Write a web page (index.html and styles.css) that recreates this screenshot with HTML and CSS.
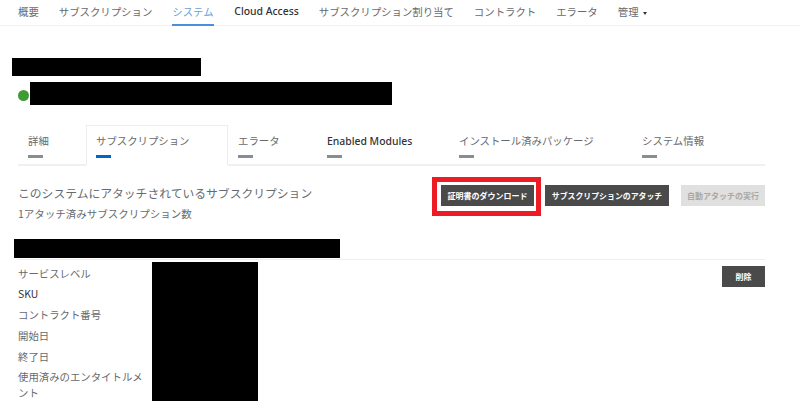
FILE: index.html
```html
<!DOCTYPE html>
<html lang="ja">
<head>
<meta charset="utf-8">
<title>システム</title>
<link rel="stylesheet" href="styles.css">
</head>
<body>
<nav class="topnav">
  <a class="nav-item">概要</a>
  <a class="nav-item">サブスクリプション</a>
  <a class="nav-item active">システム</a>
  <a class="nav-item latin">Cloud Access</a>
  <a class="nav-item">サブスクリプション割り当て</a>
  <a class="nav-item">コントラクト</a>
  <a class="nav-item">エラータ</a>
  <a class="nav-item">管理<span class="caret"></span></a>
</nav>
<main class="page">
  <div class="redact redact-title"></div>
  <div class="host-row">
    <span class="dot"></span>
    <div class="redact redact-host"></div>
  </div>
  <div class="tabs">
    <a class="tab t1">詳細<i></i></a>
    <a class="tab t2 active">サブスクリプション<i></i></a>
    <a class="tab t3">エラータ<i></i></a>
    <a class="tab t4 latin">Enabled Modules<i></i></a>
    <a class="tab t5">インストール済みパッケージ<i></i></a>
    <a class="tab t6">システム情報<i></i></a>
  </div>
  <section class="head">
    <div class="head-text">
      <h2>このシステムにアタッチされているサブスクリプション</h2>
      <p>1アタッチ済みサブスクリプション数</p>
    </div>
    <div class="actions">
      <div class="highlight"><button class="btn b-cert">証明書のダウンロード</button></div>
      <button class="btn b-attach">サブスクリプションのアタッチ</button>
      <button class="btn disabled b-auto">自動アタッチの実行</button>
    </div>
  </section>
  <div class="redact redact-sub"></div>
  <section class="detail">
    <dl class="labels">
      <dt>サービスレベル</dt>
      <dt class="sku">SKU</dt>
      <dt>コントラクト番号</dt>
      <dt>開始日</dt>
      <dt>終了日</dt>
      <dt class="multi">使用済みのエンタイトルメント</dt>
    </dl>
    <div class="redact redact-values"></div>
    <button class="btn b-del">削除</button>
  </section>
</main>
</body>
</html>
```
FILE: styles.css
```css
* { box-sizing: border-box; }
html, body { margin: 0; padding: 0; }
body {
  width: 800px;
  height: 419px;
  overflow: hidden;
  background: #fff;
  color: #666a6e;
  font-family: "Noto Sans CJK JP", "Noto Sans", sans-serif;
  font-size: 10.4px;
}
.latin { font-family: "Noto Sans", "Noto Sans CJK JP", sans-serif; font-weight: 500; color: #333; }
.topnav {
  display: flex;
  height: 26px;
  padding-left: 18px;
  border-bottom: 1px solid #f0f0f0;
}
.nav-item {
  height: 26px;
  line-height: 23px;
  margin-right: 20px;
  white-space: nowrap;
}
.nav-item:nth-child(3) { width: 42px; }
.nav-item.active {
  color: #6a9fd8;
  border-bottom: 2px solid #4a90d9;
}
.caret {
  display: inline-block;
  margin-left: 4px;
  vertical-align: middle;
  border-left: 2.5px solid transparent;
  border-right: 2.5px solid transparent;
  border-top: 3px solid #333;
}
.redact { background: #000; }
.page { padding: 32px 35px 0 18px; }
.redact-title { width: 189px; height: 18px; margin-left: -6px; }
.host-row { display: flex; align-items: center; height: 23px; margin-top: 6px; }
.dot { width: 11px; height: 11px; border-radius: 50%; background: #3f9c35; margin-top: 4px; margin-right: 1px; }
.redact-host { width: 362px; height: 23px; }
.tabs {
  display: flex;
  height: 41px;
  margin-top: 20px;
  border-bottom: 2px solid #f0f0f0;
}
.tab {
  position: relative;
  display: block;
  padding: 7px 0 0 10px;
  line-height: 18px;
  white-space: nowrap;
}
.tab i {
  position: absolute;
  left: 10px;
  top: 30px;
  width: 15px;
  height: 3px;
  background: #8a8d90;
}
.t1 { width: 68px; padding-left: 10px; }
.t2 { width: 142px; }
.t3 { width: 89px; }
.t4 { width: 132px; }
.t5 { width: 183px; }
.t6 { width: 133px; }
.tab.active {
  height: 41px;
  border: 1px solid #ededed;
  border-bottom: 2px solid #fff;
  padding-left: 9px;
  padding-top: 6px;
}
.tab.active i { left: 9px; top: 29px; background: #0066cc; }
.head { display: flex; justify-content: space-between; height: 73px; }
.head-text { padding-top: 18px; }
.head h2 { margin: 0; font-size: 11.8px; font-weight: 400; line-height: 18px; }
.head p { margin: 4px 0 0; font-size: 10.5px; line-height: 16px; }
.actions { display: flex; align-items: flex-start; padding-top: 11px; }
.highlight {
  margin-right: 4px;
  border: 5px solid #ed1c24;
  padding: 3px 2px 5px 4px;
}
.btn {
  display: block;
  height: 21px;
  padding: 0;
  border: 0;
  background: #4a4a4a;
  color: #fff;
  font-family: "Noto Sans CJK JP", sans-serif;
  font-size: 8px;
  font-weight: 700;
  white-space: nowrap;
  text-align: center;
}
.b-cert { width: 93px; }
.b-attach { width: 124px; margin-top: 8px; font-size: 7.9px; }
.b-auto { width: 84px; margin-top: 8px; margin-left: 12px; }
.btn.disabled { background: #e0e0e0; color: #a8a8a8; }
.redact-sub { width: 326px; height: 19px; margin-left: -4px; }
.detail {
  display: flex;
  align-items: flex-start;
  height: 150px;
  margin-top: 1px;
  border-top: 1px solid #efefef;
}
.labels { width: 134px; margin: 0; padding-top: 3px; }
.labels dt { height: 21px; line-height: 21px; }
.labels .sku { color: #333; margin-top: -1px; }
.labels .multi { height: auto; line-height: 16px; margin-top: 2px; width: 128px; }
.redact-values { width: 106px; height: 139px; margin-top: 2px; }
.b-del { width: 43px; margin-top: 6px; margin-left: auto; }
```
